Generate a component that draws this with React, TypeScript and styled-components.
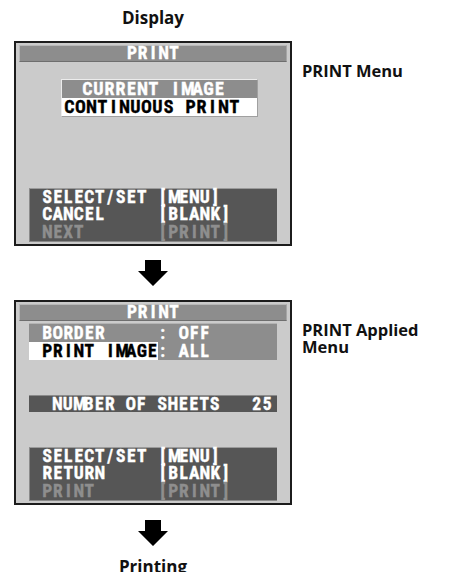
import styled, { createGlobalStyle } from 'styled-components';

const GlobalStyle = createGlobalStyle`
  html, body { margin: 0; padding: 0; background: #fff; }
  body { font-family: "Open Sans", "Lato", sans-serif; color: #111; }
`;

const Page = styled.div`
  width: 450px;
  height: 572px;
  overflow: hidden;
  padding-left: 14px;
  box-sizing: border-box;
  display: flex;
  flex-direction: column;
`;

const Caption = styled.div<{ $top: number }>`
  width: 278px;
  margin-top: ${p => p.$top}px;
  text-align: center;
  font: 700 17px/17px "Open Sans", sans-serif;
`;

const Row = styled.div`
  display: flex;
  gap: 10px;
  align-items: flex-start;
`;

const Label = styled.div`
  margin-top: 21px;
  font: 700 16.5px/17px "Open Sans", sans-serif;
`;

// on-screen display: each character sits in a fixed cell like the camcorder OSD
const Screen = styled.div`
  width: 278px;
  height: 205px;
  box-sizing: border-box;
  border: 2px solid #1c1c1c;
  background: #cbcbcb;
  display: flex;
  flex-direction: column;
  padding-top: 2px;
  font-family: "Liberation Sans Narrow", "Roboto Condensed", "Liberation Sans", sans-serif;
  font-weight: 700;
  font-size: 17.5px;
  white-space: nowrap;
  -webkit-text-stroke: 0.35px currentColor;
`;

const Cell = styled.span<{ $w: number }>`
  display: inline-block;
  width: ${p => p.$w}px;
  text-align: center;
`;

function Osd({ text, w = 10.5 }: { text: string; w?: number }) {
  return (
    <>
      {Array.from(text).map((c, i) => (
        <Cell key={i} $w={w}>{c === ' ' ? '\u00a0' : c}</Cell>
      ))}
    </>
  );
}

const TitleBar = styled.div`
  margin: 0 3px;
  height: 17px;
  box-sizing: border-box;
  background: #8d8d8d;
  border-top: 1px solid #b8b8b8;
  border-left: 1px solid #b8b8b8;
  border-bottom: 1px solid #6e6e6e;
  border-right: 1px solid #a6a6a6;
  color: #fff;
  text-align: center;
  line-height: 15px;
`;

const OptionBox = styled.div`
  margin: 17px 0 0 45px;
  width: 195px;
  border-top: 1px solid #ececec;
  border-left: 1px solid #ececec;
  border-right: 1px solid #a0a0a0;
  border-bottom: 1px solid #a0a0a0;
  font-size: 18px;
`;

const OptionRow = styled.div<{ $selected?: boolean; $indent: number }>`
  height: 18px;
  line-height: 18px;
  padding-left: ${p => p.$indent}px;
  background: ${p => (p.$selected ? '#fff' : '#8d8d8d')};
  color: ${p => (p.$selected ? '#000' : '#fff')};
`;

const SettingsPanel = styled.div`
  margin: 2px 13px 0;
  background: #8d8d8d;
  border-top: 1px solid #b4b4b4;
  color: #fff;
`;

const SettingRow = styled.div`
  display: grid;
  grid-template-columns: 128.5px 1fr;
  height: 18px;
  line-height: 18px;
`;

const SettingName = styled.span<{ $highlight?: boolean }>`
  padding-left: 13px;
  background: ${p => (p.$highlight ? '#fff' : 'transparent')};
  color: ${p => (p.$highlight ? '#000' : '#fff')};
`;

const CountBar = styled.div`
  margin: 35px 13px 0;
  height: 17px;
  padding-left: 23px;
  background: #565656;
  border-top: 1px solid #8a8a8a;
  box-sizing: border-box;
  color: #fff;
  line-height: 16px;
`;

const HelpPanel = styled.div`
  margin: auto 13px 2px;
  padding-left: 12px;
  background: #565656;
  border-top: 1px solid #9a9a9a;
  border-left: 1px solid #8a8a8a;
  border-bottom: 1px solid #8a8a8a;
  display: grid;
  grid-template-columns: 115.5px auto;
  line-height: 17.5px;
`;

const HelpCell = styled.span<{ $dim?: boolean }>`
  color: ${p => (p.$dim ? '#8e8e8e' : '#fff')};
`;

const ArrowRow = styled.div<{ $top: number; $bottom: number }>`
  width: 278px;
  display: flex;
  justify-content: center;
  margin: ${p => p.$top}px 0 ${p => p.$bottom}px;
`;

type Help = { action: string; key: string; dim?: boolean };

function HelpKeys({ items }: { items: Help[] }) {
  return (
    <HelpPanel>
      {items.map(h => [
        <HelpCell key={h.action + 'a'} $dim={h.dim}><Osd text={h.action} /></HelpCell>,
        <HelpCell key={h.action + 'k'} $dim={h.dim}><Osd text={h.key} /></HelpCell>,
      ])}
    </HelpPanel>
  );
}

function DownArrow() {
  return (
    <svg width="30" height="26" viewBox="0 0 30 26">
      <polygon points="7,0 23,0 23,11 30,11 15,26 0,11 7,11" fill="#000" />
    </svg>
  );
}

const menuHelp: Help[] = [
  { action: 'SELECT/SET', key: '[MENU]' },
  { action: 'CANCEL', key: '[BLANK]' },
  { action: 'NEXT', key: '[PRINT]', dim: true },
];

const appliedHelp: Help[] = [
  { action: 'SELECT/SET', key: '[MENU]' },
  { action: 'RETURN', key: '[BLANK]' },
  { action: 'PRINT', key: '[PRINT]', dim: true },
];

export default function App() {
  return (
    <Page>
      <GlobalStyle />
      <Caption $top={9}>Display</Caption>

      <Row style={{ marginTop: 15 }}>
        <Screen>
          <TitleBar><Osd text="PRINT" /></TitleBar>
          <OptionBox>
            <OptionRow $indent={20}><Osd text="CURRENT IMAGE" w={11} /></OptionRow>
            <OptionRow $indent={2} $selected><Osd text="CONTINUOUS PRINT" w={11} /></OptionRow>
          </OptionBox>
          <HelpKeys items={menuHelp} />
        </Screen>
        <Label>PRINT Menu</Label>
      </Row>

      <ArrowRow $top={14} $bottom={14}>
        <DownArrow />
      </ArrowRow>

      <Row>
        <Screen>
          <TitleBar><Osd text="PRINT" /></TitleBar>
          <SettingsPanel>
            <SettingRow>
              <SettingName><Osd text="BORDER" /></SettingName>
              <span><Osd text=": OFF" /></span>
            </SettingRow>
            <SettingRow>
              <SettingName $highlight><Osd text="PRINT IMAGE" /></SettingName>
              <span><Osd text=": ALL" /></span>
            </SettingRow>
          </SettingsPanel>
          <CountBar><Osd text="NUMBER OF SHEETS   25" /></CountBar>
          <HelpKeys items={appliedHelp} />
        </Screen>
        <Label>
          PRINT Applied
          <br />
          Menu
        </Label>
      </Row>

      <ArrowRow $top={15} $bottom={12}>
        <DownArrow />
      </ArrowRow>
      <Caption $top={0}>Printing</Caption>
    </Page>
  );
}
